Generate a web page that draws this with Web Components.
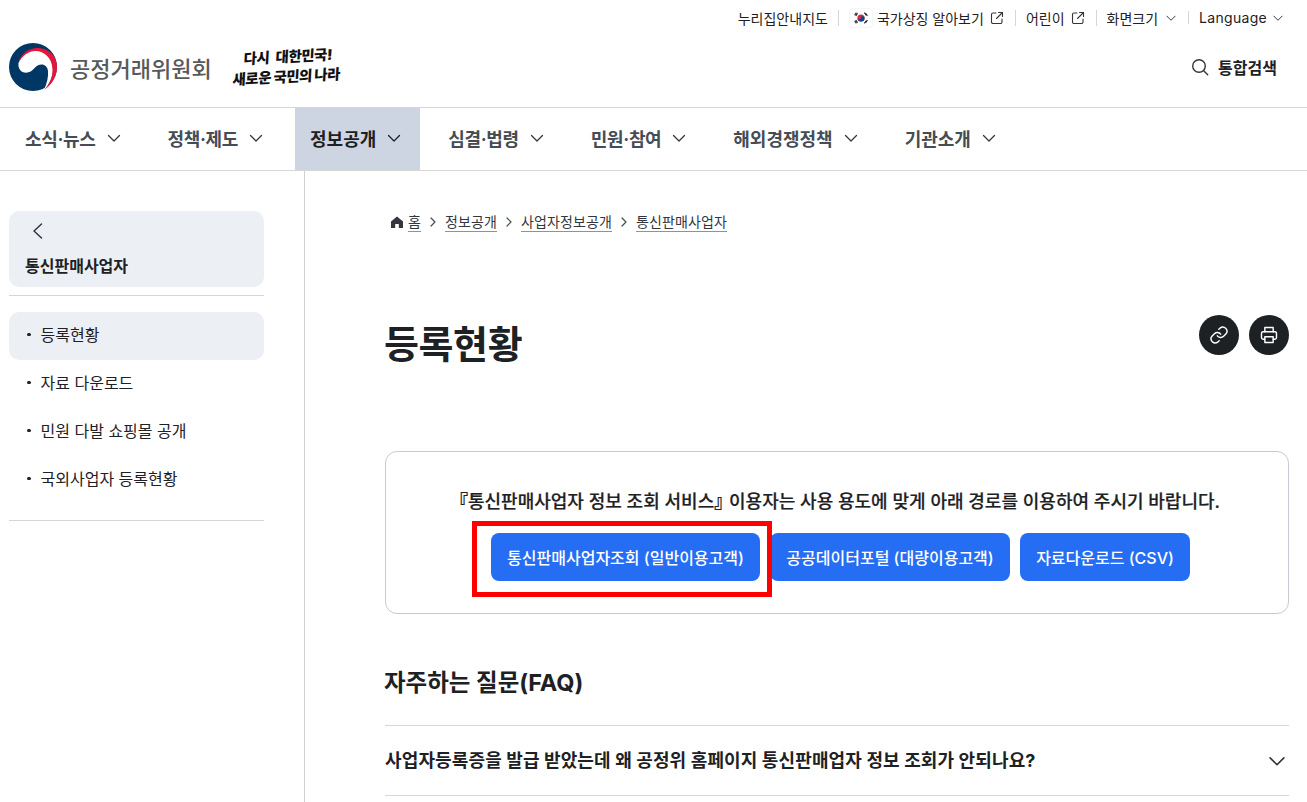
<!DOCTYPE html>
<html lang="ko">
<head>
<meta charset="utf-8">
<title>등록현황</title>
<style>
  html, body { margin: 0; height: 100%; overflow: hidden; background: #fff; }
  body { font-family: Inter, "Noto Sans CJK KR", sans-serif; color: #1e2124; }
</style>
</head>
<body>
<ftc-header></ftc-header>
<ftc-nav active="정보공개"></ftc-nav>
<ftc-page>
  <ftc-sidebar slot="side"></ftc-sidebar>
  <ftc-breadcrumb></ftc-breadcrumb>
  <ftc-title>등록현황</ftc-title>
  <ftc-notice></ftc-notice>
  <ftc-faq></ftc-faq>
</ftc-page>

<script>
const CHEVRON = (size, color, sw) =>
  `<svg width="${size}" height="${size}" viewBox="0 0 16 16" fill="none" stroke="${color}" stroke-width="${sw}" stroke-linecap="round" stroke-linejoin="round"><path d="M2.5 5.5 8 11l5.5-5.5"/></svg>`;
const EXTERNAL = `<svg width="14" height="14" viewBox="0 0 14 14" fill="none" stroke="#33363d" stroke-width="1.1" stroke-linecap="round" stroke-linejoin="round"><path d="M6 2H3a1.5 1.5 0 0 0-1.5 1.500v7.500A1.500 1.500 0 0 0 3 12.500h7.500a1.500 1.500 0 0 0 1.500-1.500V8"/><path d="M8.500 1.500h4v4M12.500 1.500 6.500 7.500"/></svg>`;

class FtcHeader extends HTMLElement {
  constructor() {
    super();
    this.attachShadow({ mode: "open" });
    this.shadowRoot.innerHTML = `<style>
:host { display: block; height: 107px; border-bottom: 1px solid #d6d6d6; }
.util { display: flex; justify-content: flex-end; align-items: center; height: 35px; padding-right: 23px; font-size: 14px; color: #1e2124; }
.util a { display: flex; align-items: center; gap: 6px; padding: 0 11px; position: relative; white-space: nowrap; }
.util a:first-child { padding-right: 10px; }
.util a + a::before { content: ""; position: absolute; left: 0; top: 2px; bottom: 2px; width: 1px; background: #d6d6d6; }
.util a:last-child { padding-right: 0; gap: 4px; }
.flagbox { width: 24px; height: 20px; margin-right: -2px; box-sizing: border-box; border: 1px solid #f4f5f6; border-radius: 4px; display: flex; align-items: center; justify-content: center; }
.flag { width: 16px; height: 16px; }
.lang { letter-spacing: .3px; }
.chev { display: flex; margin-left: 1px; }
.main { display: flex; align-items: center; justify-content: space-between; height: 72px; padding: 0 30px 8px 9px; box-sizing: border-box; }
.brand { display: flex; align-items: center; }
.name { font-size: 22px; font-weight: 500; color: #58595b; margin-left: 13px; white-space: nowrap; }
.slogan { margin-left: 21px; font-size: 14.5px; line-height: 20px; font-weight: 900; color: #111; transform: rotate(-3deg) skewX(-6deg); white-space: nowrap; letter-spacing: -0.5px; }
.slogan div:first-child { padding-left: 10px; word-spacing: 4px; }
.search { display: flex; align-items: center; gap: 9px; font-size: 16px; font-weight: 700; color: #1e2124; }
</style>
<div class="util">
  <a>누리집안내지도</a>
  <a><span class="flagbox"><svg class="flag" viewBox="0 0 16 16"><circle cx="8" cy="8" r="3.600" fill="#cd2e3a"/><path d="M4.400 8a3.600 3.600 0 0 0 7.200 0 1.800 1.800 0 0 0-3.600 0 1.800 1.800 0 0 1-3.600 0z" fill="#0047a0"/><g stroke="#222" stroke-width="1.100"><path d="M1.600 5.200 3.400 2.600M2.800 5.900 4.600 3.300M11.400 2.600l1.800 2.600M12.600 3.300l1.800 2.600M1.600 10.800l1.800 2.600M2.800 10.100l1.800 2.600M11.400 13.400l1.800-2.600M12.600 12.700l1.800-2.600"/></g></svg></span>국가상징 알아보기 ${EXTERNAL}</a>
  <a>어린이 ${EXTERNAL}</a>
  <a>화면크기 <span class="chev">${CHEVRON(12, "#33363d", 1.3)}</span></a>
  <a><span class="lang">Language</span> <span class="chev">${CHEVRON(12, "#33363d", 1.3)}</span></a>
</div>
<div class="main">
  <div class="brand">
    <svg width="48" height="48" viewBox="0 0 48 48">
      <circle cx="24" cy="24" r="24" fill="#003764"/>
      <path d="M9.500 20C12 12 20 7 28 7c8 0 16 8 16 19 0 8-4 16-9 21 3-7 4.500-13 4-19-.5-4-3-6.500-6.500-6.500-4.500 0-6.500 3.500-9.500 6-3 2.500-8 3-11 .5-2-2-3-5-2.500-8z" fill="#fff"/>
      <path d="M9.500 20C12 10 20 5.500 27 5c6-.5 13 2 17 7 2.500 3.200 4 7.500 4 12 0 9-5 18-13 23 6-6 9-14 8.500-21-.5-12-9.500-18.500-17.500-18-7 .5-13 5-16.500 12z" fill="#e5163c"/>
    </svg>
    <span class="name">공정거래위원회</span>
    <div class="slogan"><div>다시 대한민국!</div><div>새로운 국민의 나라</div></div>
  </div>
  <div class="search">
    <svg width="18" height="18" viewBox="0 0 18 18" fill="none" stroke="#33363d" stroke-width="1.400" stroke-linecap="round"><circle cx="8" cy="8" r="6.300"/><path d="m12.700 12.700 4 4"/></svg>
    통합검색
  </div>
</div>`;
  }
}

class FtcNav extends HTMLElement {
  constructor() {
    super();
    this.attachShadow({ mode: "open" });
  }
  connectedCallback() {
    const items = ["소식·뉴스", "정책·제도", "정보공개", "심결·법령", "민원·참여", "해외경쟁정책", "기관소개"];
    const active = this.getAttribute("active");
    let h = "";
    for (const it of items) {
      const cls = (it === active ? "on " : "") + (it.includes("·") ? "dot" : "");
      h += `<a class="${cls}">${it}${CHEVRON(16, it === active ? "#1e2124" : "#33363d", 1.3)}</a>`;
    }
    this.shadowRoot.innerHTML = `<style>
:host { display: block; height: 62px; border-bottom: 1px solid #d6d6d6; }
nav { display: flex; height: 100%; padding-left: 10px; gap: 13px; }
a { display: flex; align-items: center; gap: 10px; padding: 0 18px 3px 15px; font-size: 18px; font-weight: 700; color: #464c53; white-space: nowrap; }
a.dot { letter-spacing: -.35px; }
a.on { background: #ccd5e1; color: #1e2124; }
</style><nav>${h}</nav>`;
  }
}

class FtcPage extends HTMLElement {
  constructor() {
    super();
    this.attachShadow({ mode: "open" });
    this.shadowRoot.innerHTML = `<style>
:host { display: flex; height: 632px; }
aside { width: 304px; flex: none; border-right: 1px solid #cdd1d5; }
main { flex: 1; min-width: 0; padding: 0 18px 0 80px; }
</style><aside><slot name="side"></slot></aside><main><slot></slot></main>`;
  }
}

class FtcSidebar extends HTMLElement {
  constructor() {
    super();
    this.attachShadow({ mode: "open" });
    const items = ["등록현황", "자료 다운로드", "민원 다발 쇼핑몰 공개", "국외사업자 등록현황"];
    this.shadowRoot.innerHTML = `<style>
:host { display: block; padding: 40px 40px 0 9px; font-size: 16px; color: #1e2124; }
.head { background: #eceff4; border-radius: 10px; height: 76px; padding: 9px 16px 0; box-sizing: border-box; }
.head svg { display: block; margin-bottom: 13px; }
.head strong { font-size: 16px; font-weight: 700; display: block; line-height: 22px; }
.line { border-top: 1px solid #d6d6d6; margin-top: 8px; padding: 16px 0; border-bottom: 1px solid #d6d6d6; }
li { list-style: none; height: 48px; box-sizing: border-box; padding: 0 0 4px 18px; display: flex; align-items: center; gap: 10px; border-radius: 10px; white-space: nowrap; }
li::before { content: ""; width: 3.500px; height: 3.500px; background: #1e2124; border-radius: 50%; margin-top: 1px; }
li.on { background: #eceff4; }
ul { margin: 0; padding: 0; }
</style>
<div class="head">
  <svg width="24" height="22" viewBox="0 0 24 22" fill="none" stroke="#33363d" stroke-width="1.500" stroke-linecap="round" stroke-linejoin="round"><path d="M16.500 4 9 11l7.500 7"/></svg>
  <strong>통신판매사업자</strong>
</div>
<div class="line"><ul>${items.map((t, i) => `<li class="${i === 0 ? "on" : ""}">${t}</li>`).join("")}</ul></div>`;
  }
}

class FtcBreadcrumb extends HTMLElement {
  constructor() {
    super();
    this.attachShadow({ mode: "open" });
    const sep = `<svg width="10" height="10" viewBox="0 0 10 10" fill="none" stroke="#464c53" stroke-width="1.200" stroke-linecap="round" stroke-linejoin="round"><path d="M3 1l4 4-4 4"/></svg>`;
    this.shadowRoot.innerHTML = `<style>
:host { display: flex; align-items: center; height: 26px; margin: 38px 0 0 5px; font-size: 14px; letter-spacing: .12px; color: #33363d; }
a { border-bottom: 1px solid #8a949e; line-height: 18px; white-space: nowrap; }
svg { flex: none; }
.s { margin: 0 7px; display: flex; }
.home { margin-right: 4px; display: flex; }
</style>
<span class="home"><svg width="14" height="14" viewBox="0 0 14 14" fill="#33363d"><path d="M7 1.500 1 6.500V13h4.200V9h3.600v4H13V6.500z"/></svg></span>
<a>홈</a><span class="s">${sep}</span><a>정보공개</a><span class="s">${sep}</span><a>사업자정보공개</a><span class="s">${sep}</span><a>통신판매사업자</a>`;
  }
}

class FtcTitle extends HTMLElement {
  constructor() {
    super();
    this.attachShadow({ mode: "open" });
    this.shadowRoot.innerHTML = `<style>
:host { display: flex; justify-content: space-between; align-items: center; margin-top: 76px; height: 66px; }
h1 { margin: 0 0 0 -1px; font-size: 38px; letter-spacing: -0.4px; font-weight: 700; color: #1e2124; line-height: 56px; }
.acts { display: flex; gap: 10px; margin-top: -18px; }
.acts span { width: 40px; height: 40px; border-radius: 50%; background: #1e2124; display: flex; align-items: center; justify-content: center; }
</style>
<h1><slot></slot></h1>
<div class="acts">
  <span><svg width="20" height="20" viewBox="0 0 24 24" fill="none" stroke="#fff" stroke-width="1.700" stroke-linecap="round" stroke-linejoin="round"><path d="M10 13a5 5 0 0 0 7.500.5l3-3a5 5 0 0 0-7-7l-1.700 1.700"/><path d="M14 11a5 5 0 0 0-7.500-.5l-3 3a5 5 0 0 0 7 7l1.700-1.700"/></svg></span>
  <span><svg width="20" height="20" viewBox="0 0 24 24" fill="none" stroke="#fff" stroke-width="1.700" stroke-linecap="round" stroke-linejoin="round"><path d="M7 8V3h10v5"/><path d="M7 17H5a2 2 0 0 1-2-2v-5a2 2 0 0 1 2-2h14a2 2 0 0 1 2 2v5a2 2 0 0 1-2 2h-2"/><path d="M7 14h10v7H7z"/></svg></span>
</div>`;
  }
}

class FtcNotice extends HTMLElement {
  constructor() {
    super();
    this.attachShadow({ mode: "open" });
    this.shadowRoot.innerHTML = `<style>
:host { display: block; position: relative; margin-top: 74px; height: 163px; box-sizing: border-box; border: 1px solid #c6cbd1; border-radius: 12px; }
p { margin: 0; padding: 36px 0 0 4px; text-align: center; font-size: 18px; font-weight: 500; -webkit-text-stroke: .2px #1e2124; line-height: 28px; color: #1e2124; white-space: nowrap; }
.ql { margin-left: -8px; font-weight: 900; }
.qr { letter-spacing: -8px; font-weight: 900; }
.btns { display: flex; justify-content: center; gap: 10px; margin-top: 17px; padding-left: 7px; }
.btns a { height: 48px; display: flex; align-items: center; padding: 0 16.200px; background: #256ef4; color: #fff; border-radius: 8px; font-size: 16px; font-weight: 500; white-space: nowrap; }
.mark { position: absolute; left: 86px; top: 69px; width: 300px; height: 76px; box-sizing: border-box; border: 5px solid #f00; }
</style>
<p><span class="ql">『</span>통신판매사업자 정보 조회 서비스<span class="qr">』</span> 이용자는 사용 용도에 맞게 아래 경로를 이용하여 주시기 바랍니다.</p>
<div class="btns"><a>통신판매사업자조회 (일반이용고객)</a><a>공공데이터포털 (대량이용고객)</a><a>자료다운로드 (CSV)</a></div>
<div class="mark"></div>`;
  }
}

class FtcFaq extends HTMLElement {
  constructor() {
    super();
    this.attachShadow({ mode: "open" });
    this.shadowRoot.innerHTML = `<style>
:host { display: block; }
h2 { margin: 49px 0 0 -1px; font-size: 23.500px; font-weight: 700; line-height: 40px; color: #1e2124; }
.row { margin-top: 22px; border-top: 1px solid #d6d6d6; border-bottom: 1px solid #d6d6d6; height: 69px; display: flex; align-items: center; justify-content: space-between; padding-right: 2px; font-size: 18px; letter-spacing: .13px; font-weight: 700; color: #1e2124; }
.row span { margin-top: -4px; }
.row svg { flex: none; }
</style>
<h2>자주하는 질문(FAQ)</h2>
<div class="row"><span>사업자등록증을 발급 받았는데 왜 공정위 홈페이지 통신판매업자 정보 조회가 안되나요?</span>${CHEVRON(20, "#33363d", 1.3)}</div>`;
  }
}

customElements.define("ftc-header", FtcHeader);
customElements.define("ftc-nav", FtcNav);
customElements.define("ftc-page", FtcPage);
customElements.define("ftc-sidebar", FtcSidebar);
customElements.define("ftc-breadcrumb", FtcBreadcrumb);
customElements.define("ftc-title", FtcTitle);
customElements.define("ftc-notice", FtcNotice);
customElements.define("ftc-faq", FtcFaq);
</script>
</body>
</html>
